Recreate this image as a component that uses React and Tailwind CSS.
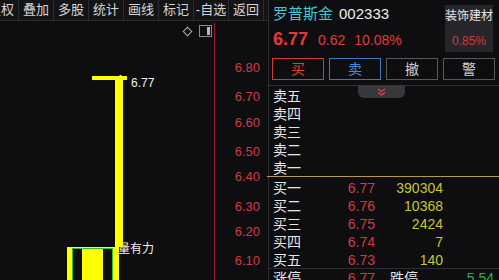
import React from "react";

const tools = ["复权", "叠加", "多股", "统计", "画线", "标记", "-自选", "返回"];

const prices = [
  { v: "6.80", cls: "top-[40px]" },
  { v: "6.70", cls: "top-[69px]" },
  { v: "6.60", cls: "top-[95px]" },
  { v: "6.50", cls: "top-[124px]" },
  { v: "6.40", cls: "top-[149px]" },
  { v: "6.30", cls: "top-[179px]" },
  { v: "6.20", cls: "top-[204px]" },
  { v: "6.10", cls: "top-[233px]" },
];

const sells = ["卖五", "卖四", "卖三", "卖二", "卖一"];

const buys = [
  { n: "买一", p: "6.77", q: "390304" },
  { n: "买二", p: "6.76", q: "10368" },
  { n: "买三", p: "6.75", q: "2424" },
  { n: "买四", p: "6.74", q: "7" },
  { n: "买五", p: "6.73", q: "140" },
];

// === CHART SIDE ===
function Chart() {
  return (
    <div className="w-[268px] flex flex-col">
      <div className="h-[21px] flex border-b border-[#2c2c30] bg-[#141417] overflow-hidden">
        <div className="flex -ml-[16px]">
          {tools.map((t) => (
            <div
              key={t}
              className="w-[35px] shrink-0 border-r border-[#2c2c30] text-center text-[13px] leading-[20px] text-[#d6d6d6]"
            >
              {t}
            </div>
          ))}
        </div>
      </div>

      <div className="relative flex-1">
        {/* toolbar icons */}
        <div className="absolute left-[184px] top-[7px] w-[7px] h-[7px] rotate-45 border border-[#b0b0b0]"></div>
        <div className="absolute left-[199px] top-[4px] w-[13px] h-[12px] border border-[#8a8a8a]">
          <div className="absolute right-[1px] top-[1px] w-[3px] h-[8px] bg-[#b8b8b8]"></div>
        </div>

        {/* axis line */}
        <div className="absolute left-[214px] top-[2px] bottom-0 w-px bg-[#9c1e26]"></div>

        {prices.map((p) => (
          <div
            key={p.v}
            className={`absolute right-[8px] text-[13px] leading-[14px] text-[#d23a40] ${p.cls}`}
          >
            {p.v}
          </div>
        ))}

        {/* candles */}
        <div className="absolute left-[118px] top-[221px] text-[12px] leading-[14px] text-[#f0f0f0]">量有力</div>
        <div className="absolute left-[92px] top-[55px] w-[35px] h-[4px] bg-[#ffff00]"></div>
        <div className="absolute left-[115px] top-[55px] w-[8px] h-[171px] bg-[#ffff00]"></div>
        <div className="absolute left-[119px] top-[54px] w-[3px] h-[3px] rounded-full bg-white"></div>
        <div className="absolute left-[131px] top-[55px] text-[12px] leading-[14px] text-[#f0f0f0]">6.77</div>

        <div className="absolute left-[67px] top-[226px] w-[52px] bottom-0 bg-[#ffff00]">
          <div className="absolute left-[5px] top-[1px] w-[41px] bottom-0 border-l border-t border-r border-[#2fbf2f] bg-[#0e0e10]">
            <div className="absolute left-[9px] top-0 w-[21px] bottom-0 bg-[#ffff00]"></div>
          </div>
        </div>
      </div>
    </div>
  );
}

// === QUOTE PANEL ===
function Quote() {
  return (
    <div className="relative flex-1 flex flex-col border-l border-[#2c2c30]">
      <div className="pl-[3px] pr-[4px]">
        <div className="flex">
          <div className="flex flex-col pl-[1px] pt-[4px]">
            <div className="flex items-baseline gap-[6px] leading-[20px]">
              <span className="text-[15px] text-[#3ec6d6]">罗普斯金</span>
              <span className="text-[15px] text-[#ececec]">002333</span>
            </div>
            <div className="flex items-baseline mt-[4px] leading-[22px] text-[#e2383e]">
              <span className="text-[18px] font-bold">6.77</span>
              <span className="text-[14px] ml-[10px]">0.62</span>
              <span className="text-[14px] ml-[9px]">10.08%</span>
            </div>
          </div>
          <div className="ml-auto mr-[2px] mt-[5px] w-[48px] h-[47px] bg-[#262629] flex flex-col items-center">
            <div className="pt-[3px] text-[12px] leading-[16px] text-[#e8e8e8] whitespace-nowrap">装饰建材</div>
            <div className="mt-[9px] text-[12px] leading-[16px] text-[#d2383e]">0.85%</div>
          </div>
        </div>

        <div className="grid grid-cols-4 gap-[5px] mt-[6px] h-[22px] text-[14px]">
          <button className="border border-[#d23a3a] text-[#e0403c] leading-[20px]">买</button>
          <button className="border border-[#3a78c0] text-[#4a8ad6] leading-[20px]">卖</button>
          <button className="border border-[#58585c] text-[#cfcfcf] leading-[20px]">撤</button>
          <button className="border border-[#58585c] text-[#cfcfcf] leading-[20px]">警</button>
        </div>
      </div>

      <div className="mt-[5px] h-px shrink-0 bg-[#2e2e32] -ml-[2px]"></div>

      <div className="h-[90px] shrink-0 pt-[1px] pl-[4px]">
        {sells.map((s) => (
          <div key={s} className="h-[18px] text-[14px] leading-[18px] text-[#e6e6e6]">
            {s}
          </div>
        ))}
      </div>

      <div className="h-px shrink-0 bg-[#b49a48] -ml-[2px]"></div>

      <div className="h-[91px] shrink-0 pt-[2px] pl-[4px]">
        {buys.map((b) => (
          <div key={b.n} className="flex h-[18px] text-[14px] leading-[18px]">
            <span className="w-[60px] text-[#e6e6e6]">{b.n}</span>
            <span className="w-[42px] text-right text-[#d23a40]">{b.p}</span>
            <span className="w-[68px] text-right text-[#c6c634]">{b.q}</span>
          </div>
        ))}
      </div>

      <div className="h-px shrink-0 bg-[#2e2e32]"></div>

      <div className="flex h-[18px] shrink-0 pl-[4px] pr-[5px] text-[14px] leading-[18px]">
        <span className="w-[60px] text-[#e6e6e6]">涨停</span>
        <span className="w-[42px] text-right text-[#d23a40]">6.77</span>
        <span className="ml-[15px] text-[#e6e6e6]">跌停</span>
        <span className="flex-1 text-right text-[#2fb04a]">5.54</span>
      </div>

      {/* collapse handle */}
      <div className="absolute left-[89px] top-[85px] w-[47px] h-[13px] rounded-b-[6px] bg-[#38383c] flex items-center justify-center">
        <svg width="9" height="8" viewBox="0 0 9 8" fill="none" stroke="#e0404a" strokeWidth="1.4">
          <path d="M1 1l3.5 2.5L8 1" />
          <path d="M1 4.5l3.5 2.5L8 4.5" />
        </svg>
      </div>
    </div>
  );
}

export default function App() {
  return (
    <div className="w-[499px] h-[280px] overflow-hidden flex bg-[#0e0e10] font-['Liberation_Sans','Noto_Sans_CJK_SC',sans-serif]">
      <Chart />
      <Quote />
    </div>
  );
}
